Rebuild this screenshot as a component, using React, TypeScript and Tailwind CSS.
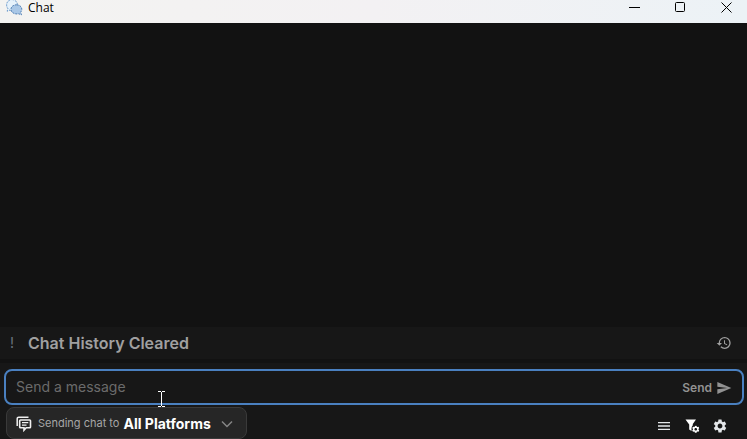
import React, { useState } from 'react';
import { MdHistory, MdMenu, MdSend, MdSettings } from 'react-icons/md';

const PLATFORMS = ['All Platforms', 'Twitch', 'YouTube', 'Kick'];

function AppIcon() {
    return (
        <svg width="18" height="18" viewBox="0 0 18 18" fill="none" aria-hidden="true">
            <path
                d="M6 -3.5a5.5 5.5 0 0 1 3.6 9.6A5.5 5.5 0 0 1 4 7L1.2 8.2 1.8 5.4A5.5 5.5 0 0 1 6 -3.5Z"
                transform="translate(0 3)"
                fill="#e6f2fb"
                stroke="#5f92c8"
                strokeDasharray="2 1"
            />
            <path
                d="M10.5 4.8c3.2 0 5.3 1.9 5.3 4.400 0 1.300-.5 2.300-1.200 3.100l1 2.500-3-1c-3.900.8-7.600-1.100-7.600-4.600 0-2.500 2.300-4.400 5.500-4.400Z"
                fill="#a9c7e6"
                stroke="#5582b5"
                strokeDasharray="2 1"
            />
        </svg>
    );
}

function ChatIcon() {
    return (
        <svg width="16" height="16" viewBox="0 0 16 16" fill="none" stroke="#f0f0f0" aria-hidden="true">
            <path d="M1.200 10V2.700A1.500 1.500 0 0 1 2.700 1.200H12.500" strokeWidth="1.500" />
            <path
                d="M4.500 4h9.200a.8.8 0 0 1 .8.8v6.200a.8.8 0 0 1-.8.8h-3.500L8 14.200V11.800H4.500a.8.8 0 0 1-.8-.8V4.800a.8.8 0 0 1 .8-.8Z"
                strokeWidth="1.600"
            />
            <path d="M6 6.700h6.300M6 9.200h4.500" strokeWidth="1.200" />
        </svg>
    );
}

function FilterIcon() {
    return (
        <svg width="16" height="16" viewBox="0 0 16 16" aria-hidden="true">
            <path d="M1.500 1.500h10.500L8.800 6v1.300A4.500 4.500 0 0 0 7.500 10.500v2.500L5.200 11.500V6.500Z" fill="#fff" />
            <svg x="8" y="7.500" width="7.500" height="7.500" viewBox="2 2 20 20">
                <MdSettings size={24} color="#fff" />
            </svg>
        </svg>
    );
}

function TitleBar() {
    const button = 'flex h-full w-[41px] items-start justify-center pt-0.5';

    return (
        <header className="flex h-[23px] shrink-0 items-center gap-[5px] bg-linear-to-r from-[#f3f3f1] via-[#f3f1f3] to-[#ecf2f6] text-black">
            <div className="flex flex-1 items-start gap-1 self-start pl-1.5">
                <AppIcon />
                <h1 className="font-['Open_Sans',sans-serif] text-xs leading-4">Chat</h1>
            </div>
            <button aria-label="Minimize" className={button}>
                <svg width="11" height="11" viewBox="0 0 11 11" stroke="currentColor">
                    <path d="M0 5.500h11" />
                </svg>
            </button>
            <button aria-label="Maximize" className={button}>
                <svg width="11" height="11" viewBox="0 0 11 11" fill="none" stroke="currentColor">
                    <rect x=".5" y=".5" width="9" height="9" rx="1" />
                </svg>
            </button>
            <button aria-label="Close" className={button}>
                <svg width="11" height="11" viewBox="0 0 11 11" stroke="currentColor">
                    <path d="M.5.5l10 10M10.500.5l-10 10" />
                </svg>
            </button>
        </header>
    );
}

export default function App() {
    const [message, setMessage] = useState('');
    const [platform, setPlatform] = useState(PLATFORMS[0]);

    return (
        <div className="flex min-h-screen flex-col bg-[#121212] font-['Inter',sans-serif] text-[#a0a0a0]">
            <TitleBar />

            <main className="flex flex-1 flex-col justify-end pb-1">
                <div className="flex h-8 items-center bg-[#171717] pr-[15px] pl-2">
                    <span className="w-5 pl-0.5 text-sm text-[#6b737e]">!</span>
                    <p className="flex-1 text-base font-semibold">Chat History Cleared</p>
                    <button aria-label="Show history">
                        <MdHistory size={16} />
                    </button>
                </div>
            </main>

            <footer className="bg-[#171717] pt-1.5">
                <form
                    onSubmit={(e) => e.preventDefault()}
                    className="mr-[3px] ml-1 flex h-9 items-center rounded-lg border-2 border-[#4a80c0] px-2.5"
                >
                    <input
                        aria-label="Message"
                        placeholder="Send a message"
                        value={message}
                        onChange={(e) => setMessage(e.target.value)}
                        className="min-w-0 flex-1 text-sm outline-none placeholder:text-[#6b6b6b]"
                    />
                    <button className="flex items-center gap-1 pt-0.5 text-xs font-semibold text-[#929292]">
                        Send
                        <MdSend size={16} />
                    </button>
                </form>

                {/* Cursor resting on the edge of the message box */}
                <div className="relative">
                    <svg
                        className="pointer-events-none absolute -top-3.5 left-[158px]"
                        width="7"
                        height="16"
                        viewBox="0 0 7 16"
                        fill="none"
                        stroke="#fff"
                        aria-hidden="true"
                    >
                        <path d="M0 .5h3M4 .5h3M3.500 1v14M0 15.500h3M4 15.500h3" />
                    </svg>
                </div>

                <div className="mt-0.5 flex items-start justify-between pr-[19px] pl-1.5">
                    <div className="flex h-8 items-center rounded-lg border border-[#3a3a3a] bg-[#262626] pt-px pr-[13px] pl-[9px]">
                        <ChatIcon />
                        <label htmlFor="platform" className="mr-1 ml-1.5 text-[11px] text-[#a6a6a6]">
                            Sending chat to
                        </label>
                        <div className="grid items-center">
                            <select
                                id="platform"
                                value={platform}
                                onChange={(e) => setPlatform(e.target.value)}
                                className="col-start-1 row-start-1 appearance-none pr-[22px] text-sm font-bold text-white outline-none"
                            >
                                {PLATFORMS.map((name) => (
                                    <option key={name}>{name}</option>
                                ))}
                            </select>
                            <svg
                                className="pointer-events-none col-start-1 row-start-1 justify-self-end"
                                width="12"
                                height="8"
                                viewBox="0 0 12 8"
                                fill="none"
                                stroke="#858585"
                                strokeWidth="1.500"
                                aria-hidden="true"
                            >
                                <path d="M1 1.500l5 5 5-5" />
                            </svg>
                        </div>
                    </div>

                    <div className="flex items-center gap-3 self-center pt-1.5 text-[#e4e7ea]">
                        <button aria-label="Menu">
                            <MdMenu size={16} />
                        </button>
                        <button aria-label="Filter settings">
                            <FilterIcon />
                        </button>
                        <button aria-label="Settings">
                            <MdSettings size={16} />
                        </button>
                    </div>
                </div>
            </footer>
        </div>
    );
}
